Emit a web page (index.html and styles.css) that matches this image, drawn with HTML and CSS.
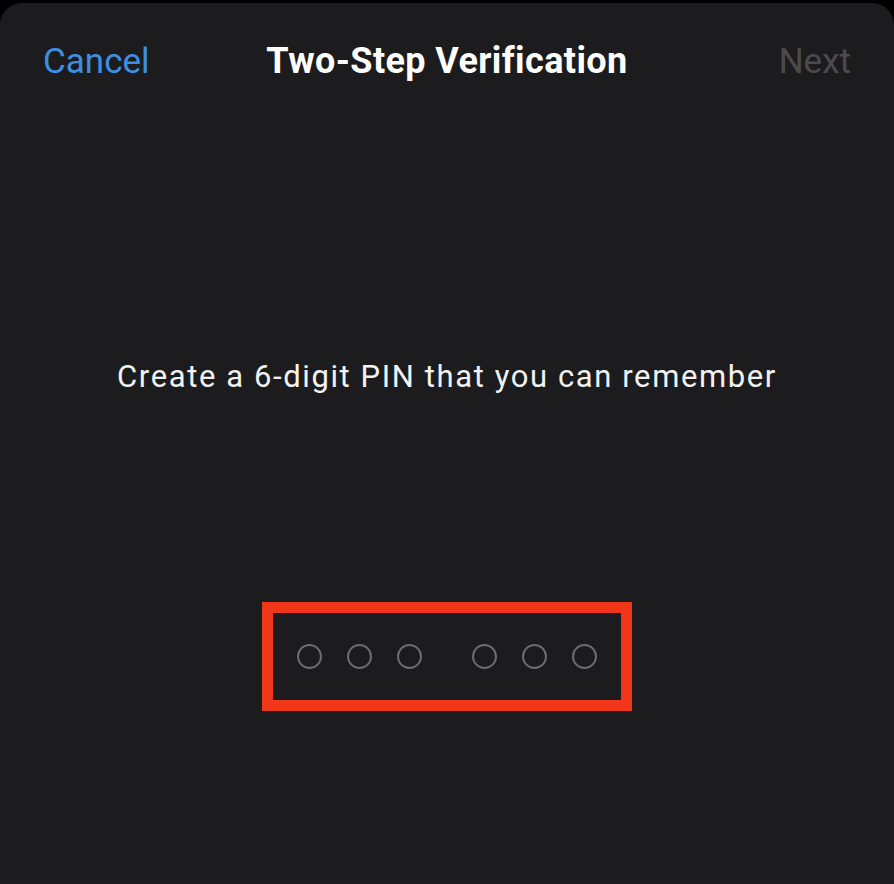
FILE: index.html
```html
<!DOCTYPE html>
<html lang="en">
<head>
  <meta charset="UTF-8">
  <meta name="viewport" content="width=device-width, initial-scale=1.0">
  <title>Two-Step Verification</title>
  <link rel="stylesheet" href="styles.css">
</head>
<body>
  <div class="sheet">
    <div class="nav">
      <button class="nav-btn cancel">Cancel</button>
      <h1 class="nav-title">Two-Step Verification</h1>
      <button class="nav-btn next" disabled>Next</button>
    </div>

    <p class="prompt">Create a 6-digit PIN that you can remember</p>

    <div class="pin-wrap">
      <div class="pin-box">
        <div class="pin-group">
          <span class="dot"></span>
          <span class="dot"></span>
          <span class="dot"></span>
        </div>
        <div class="pin-group">
          <span class="dot"></span>
          <span class="dot"></span>
          <span class="dot"></span>
        </div>
      </div>
    </div>
  </div>
</body>
</html>
```

FILE: styles.css
```css
html, body { margin: 0; padding: 0; background: #000; }
body { font-family: Roboto, "Noto Sans", sans-serif; overflow: hidden; }

.sheet {
  margin-top: 3px;
  height: 881px;
  background: #1c1c1e;
  border-radius: 22px 22px 0 0;
}

.nav {
  display: grid;
  grid-template-columns: 1fr auto 1fr;
  align-items: center;
  padding: 0 43px;
  height: 116px;
}
.nav-btn {
  background: none;
  border: none;
  padding: 0;
  font-family: inherit;
  font-size: 35px;
  cursor: pointer;
}
.cancel { color: #3d8fe0; justify-self: start; }
.next { color: #4b4b4e; justify-self: end; }
.nav-title {
  margin: 0;
  color: #fff;
  font-size: 36px;
  font-weight: 700;
  letter-spacing: 0.4px;
}

.prompt {
  margin: 239px 0 0;
  text-align: center;
  color: #f2f2f2;
  font-size: 31px;
  letter-spacing: 1.6px;
}

.pin-wrap { display: flex; justify-content: center; margin-top: 207px; }
.pin-box {
  width: 348px;
  height: 87px;
  border: 11px solid #f2361a;
  display: flex;
  justify-content: center;
  align-items: center;
  gap: 50px;
}
.pin-group { display: flex; gap: 25px; }
.dot {
  width: 21px;
  height: 21px;
  border: 2px solid #6c6c6f;
  border-radius: 50%;
}
```
